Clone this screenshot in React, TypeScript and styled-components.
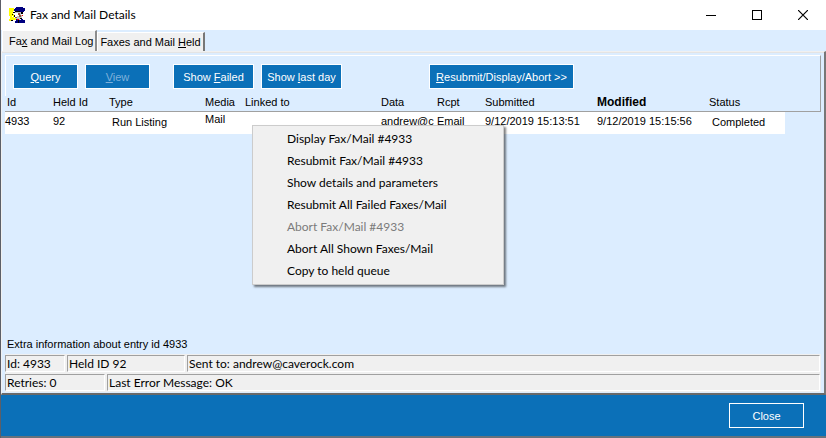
import React from "react";
import styled, { createGlobalStyle } from "styled-components";

const PAPER = "#dcedff";
const BLUE = "#0b70b8";
const ARIAL = '"Liberation Sans", Arial, sans-serif';
const HUMANIST = 'Lato, "Open Sans", sans-serif';

const GlobalStyle = createGlobalStyle`
  * { box-sizing: border-box; }
  body { margin: 0; background: #fff; color: #000; font: 11px/14px ${ARIAL}; }
  button { font: inherit; color: inherit; margin: 0; padding: 0; border: 0; background: none; white-space: nowrap; }
`;

const Window = styled.div`
  position: relative;
  min-height: 100vh;
  display: flex;
  flex-direction: column;
  background: ${PAPER};
  border-left: 1px solid #5c5f68;
`;

const TitleBar = styled.header`
  height: 30px;
  display: flex;
  align-items: center;
  background: #fff;
  padding-left: 8px;
`;

const Title = styled.h1`
  margin: 0 0 0 5px;
  flex: 1;
  font: 12px/16px ${HUMANIST};
`;

const WindowButton = styled.button`
  width: 46px;
  height: 28px;
  display: flex;
  align-items: center;
  justify-content: center;
`;

const Tabs = styled.div`
  display: flex;
  align-items: flex-end;
  height: 21px;
  padding-left: 1px;
`;

const Tab = styled.button<{ $active?: boolean }>`
  height: ${(p) => (p.$active ? 21 : 19)}px;
  padding: 0 2px 0 ${(p) => (p.$active ? 6 : 2)}px;
  background: #f0f0f0;
  border-top: 1px solid #fff;
  border-left: 1px solid #fff;
  border-right: 2px solid ${(p) => (p.$active ? "#8c8c8c" : "#777")};
`;

const Panel = styled.main`
  flex: 1;
  display: flex;
  flex-direction: column;
  padding: 1px 3px 1px;
  border-top: 1px solid #f0f0f0;
  border-left: 1px solid #f0f0f0;
  border-right: 2px solid #777;
  border-bottom: 2px solid #696969;
  box-shadow: inset 0 1px #e4e4e4;
`;

const Toolbar = styled.div`
  display: flex;
  height: 41px;
  margin-top: 2px;
  padding: 8px 7px 0;
  border-top: 1px solid #fff;
  border-left: 1px solid #fff;
  border-right: 1px solid #a0a0a0;
`;

const ToolButton = styled.button<{ $width: number; $gap?: number }>`
  width: ${(p) => p.$width}px;
  height: 25px;
  margin-right: ${(p) => p.$gap ?? 0}px;
  background: ${BLUE};
  border: 1px solid #fff;
  color: #fff;
  &:disabled { color: #7fb0da; }
`;

const Log = styled.table`
  width: 100%;
  table-layout: fixed;
  border-collapse: separate;
  border-spacing: 0;
`;

const Head = styled.th<{ $inset?: boolean; $sorted?: boolean }>`
  height: 16px;
  padding: 0 0 3px ${(p) => (p.$inset ? 2 : 0)}px;
  border-bottom: 1px solid #a0a0a0;
  text-align: left;
  font-size: ${(p) => (p.$sorted ? 12 : 11)}px;
  font-weight: ${(p) => (p.$sorted ? "bold" : "normal")};
  line-height: 12px;
  white-space: nowrap;
  &:last-child { border-right: 1px solid #a0a0a0; }
`;

const Cell = styled.td<{ $kind?: "list" | "raised" }>`
  height: 22px;
  padding: ${(p) => (p.$kind === "list" ? "3px 0 0 3px" : p.$kind === "raised" ? "0 0 3px" : "2px 0 0")};
  vertical-align: top;
  background: #fff;
  white-space: nowrap;
  &:empty:last-child { background: ${PAPER}; }
`;

const Extra = styled.p`
  margin: auto 0 3px;
  padding-left: 2px;
`;

const StatusLine = styled.div`
  display: flex;
  gap: 2px;
  height: 19px;
  padding: 1px 1px 1px 0;
  background: #f0f0f0;
  font: 12px/16px ${HUMANIST};
`;

const StatusField = styled.output<{ $width?: number }>`
  flex: ${(p) => (p.$width ? `0 0 ${p.$width}px` : "1")};
  padding-left: 1px;
  border: 1px solid #fff;
  border-top-color: #a0a0a0;
  border-left-color: #a0a0a0;
  white-space: nowrap;
`;

const Footer = styled.footer`
  height: 43px;
  display: flex;
  align-items: center;
  justify-content: flex-end;
  padding-right: 22px;
  background: ${BLUE};
  border-bottom: 2px solid #66727d;
`;

const CloseButton = styled.button`
  width: 75px;
  height: 25px;
  border: 1px solid #fff;
  color: #fff;
`;

const Menu = styled.div`
  position: absolute;
  left: 251px;
  top: 125px;
  width: 252px;
  padding: 2px;
  background: #f0f0f0;
  border: 1px solid #ccc;
  box-shadow: 2px 2px 2px rgba(0, 0, 0, 0.5);
`;

const MenuItem = styled.button`
  display: block;
  width: 100%;
  height: 22px;
  padding-left: 32px;
  text-align: left;
  font: 12px/16px ${HUMANIST};
  &:disabled { color: #7b7b7b; }
`;

function AppIcon() {
  return (
    <svg width="16" height="16" viewBox="0 0 16 16" shapeRendering="crispEdges" aria-hidden="true">
      <path fill="#ff0" d="M0 1h5v3H4v3h1v4h3v2H4v1H0v-2h1V9H0z" />
      <path fill="#c0c0c0" d="M6 5h6v3h1v3h-2v2H7v-2H6z" />
      <path fill="#fff" d="M6 6h4v3H8v2H6zM3 9h1v1H3z" />
      <path fill="#8c4a32" d="M9 6h2v2h1v2h-2V8H9zM6 10h2v1H6z" />
      <path fill="#000" d="M4 5h2v1H4zM3 7h1v1H3zM5 8h1v2H5zM12 5h2v2h-2zM11 11h2v1h-2zM2 13h2v1H2z" />
      <path fill="#000080" d="M7 0h7v1h2v3h-1v1H6V4H5V2h1V1h1zM7 12h2v1h3v-1h2v1h2v3H6v-2h1z" />
      <path fill="#000" d="M6 4h5v1H6zM9 13h1v3H9z" />
      <path fill="#f00" d="M13 8h1v1h-1zM8 12h2v1H8z" />
    </svg>
  );
}

const columns = [
  { label: "Id", width: 48, inset: true },
  { label: "Held Id", width: 56 },
  { label: "Type", width: 96 },
  { label: "Media", width: 40 },
  { label: "Linked to", width: 136 },
  { label: "Data", width: 56 },
  { label: "Rcpt", width: 48 },
  { label: "Submitted", width: 112 },
  { label: "Modified", width: 112, sorted: true },
  { label: "Status", width: 76 },
];

const Column = styled.col<{ $width?: number }>`
  width: ${(p) => (p.$width ? `${p.$width}px` : "auto")};
`;

const menuItems = [
  "Display Fax/Mail #4933",
  "Resubmit Fax/Mail #4933",
  "Show details and parameters",
  "Resubmit All Failed Faxes/Mail",
  "Abort Fax/Mail #4933",
  "Abort All Shown Faxes/Mail",
  "Copy to held queue",
];

export default function App() {
  return (
    <>
      <GlobalStyle />
      <Window>
        <TitleBar>
          <AppIcon />
          <Title>Fax and Mail Details</Title>
          <WindowButton aria-label="Minimize">
            <svg width="10" height="10" shapeRendering="crispEdges"><path d="M0 5.5h10" stroke="#000" /></svg>
          </WindowButton>
          <WindowButton aria-label="Maximize">
            <svg width="10" height="10" shapeRendering="crispEdges"><path d="M.5.5h9v9h-9z" fill="none" stroke="#000" /></svg>
          </WindowButton>
          <WindowButton aria-label="Close window">
            <svg width="10" height="10"><path d="M0 0l10 10M10 0L0 10" stroke="#000" strokeWidth="1.2" /></svg>
          </WindowButton>
        </TitleBar>
        <Tabs role="tablist">
          <Tab role="tab" aria-selected="true" $active>Fa<u>x</u> and Mail Log</Tab>
          <Tab role="tab" aria-selected="false">Faxes and Mail <u>H</u>eld</Tab>
        </Tabs>
        <Panel>
          <Toolbar>
            <ToolButton $width={65} $gap={7}><u>Q</u>uery</ToolButton>
            <ToolButton $width={65} $gap={23} disabled><u>V</u>iew</ToolButton>
            <ToolButton $width={81} $gap={7}>Show <u>F</u>ailed</ToolButton>
            <ToolButton $width={81} $gap={87}>Show <u>l</u>ast day</ToolButton>
            <ToolButton $width={145}><u>R</u>esubmit/Display/Abort &gt;&gt;</ToolButton>
          </Toolbar>
          <Log>
            <colgroup>
              {columns.map((c) => <Column key={c.label} $width={c.width} />)}
              <Column />
            </colgroup>
            <thead>
              <tr>
                {columns.map((c) => (
                  <Head key={c.label} scope="col" $inset={c.inset} $sorted={c.sorted}>{c.label}</Head>
                ))}
                <Head as="td" />
              </tr>
            </thead>
            <tbody>
              <tr>
                <Cell>4933</Cell>
                <Cell>92</Cell>
                <Cell $kind="list">Run Listing</Cell>
                <Cell $kind="raised">Mail</Cell>
                <Cell />
                <Cell>andrew@c</Cell>
                <Cell>Email</Cell>
                <Cell>9/12/2019 15:13:51</Cell>
                <Cell>9/12/2019 15:15:56</Cell>
                <Cell $kind="list">Completed</Cell>
                <Cell />
              </tr>
            </tbody>
          </Log>
          <Extra>Extra information about entry id 4933</Extra>
          <StatusLine>
            <StatusField $width={60}>Id: 4933</StatusField>
            <StatusField $width={118}>Held ID 92</StatusField>
            <StatusField>Sent to: andrew@caverock.com</StatusField>
          </StatusLine>
          <StatusLine>
            <StatusField $width={100}>Retries: 0</StatusField>
            <StatusField>Last Error Message: OK</StatusField>
          </StatusLine>
        </Panel>
        <Footer>
          <CloseButton>Close</CloseButton>
        </Footer>
        <Menu role="menu">
          {menuItems.map((label) => (
            <MenuItem key={label} role="menuitem" disabled={label.startsWith("Abort Fax")}>{label}</MenuItem>
          ))}
        </Menu>
      </Window>
    </>
  );
}
